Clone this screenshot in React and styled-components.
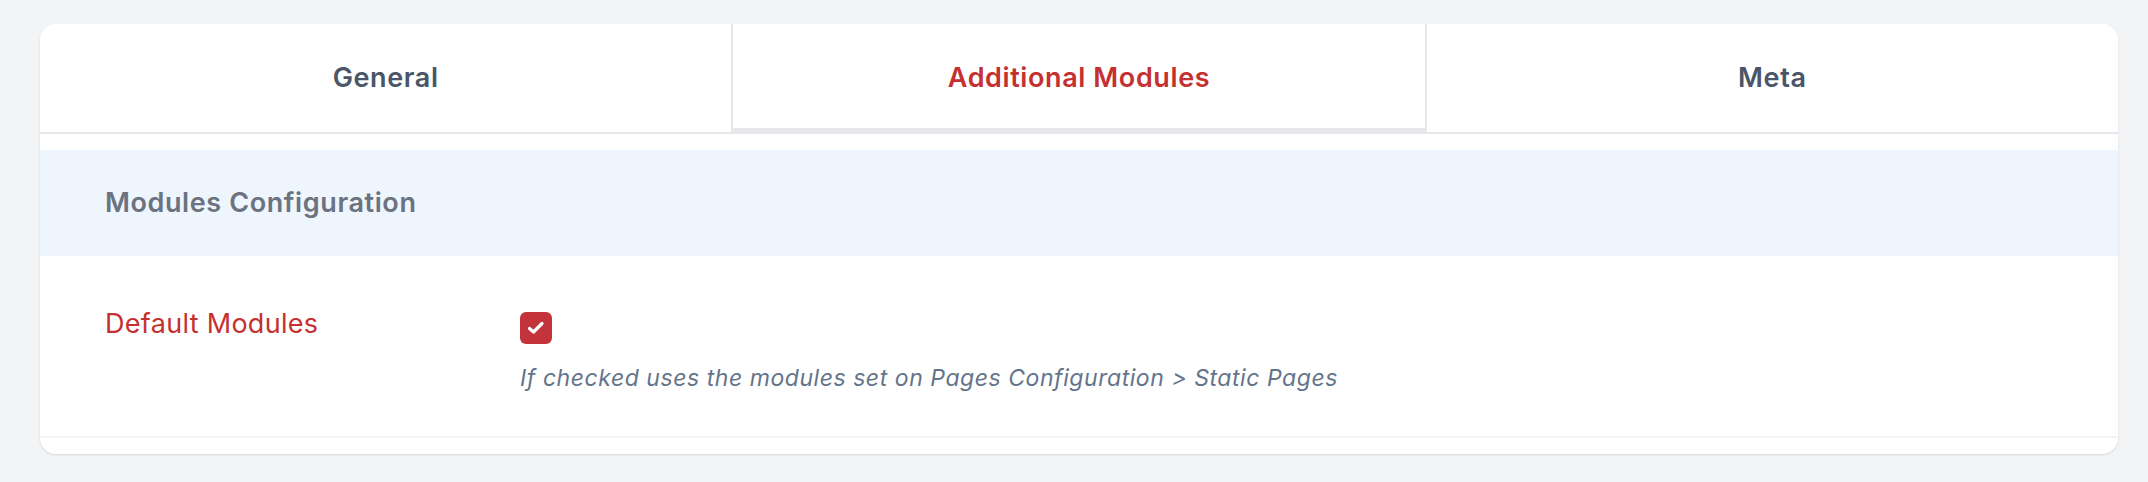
import React, { useState } from "react";
import styled, { createGlobalStyle } from "styled-components";

const GlobalStyle = createGlobalStyle`
  html, body { margin: 0; padding: 0; background: #f3f4f6; }
  body { font-family: Inter, "Noto Sans", Arial, sans-serif; -webkit-font-smoothing: antialiased; }
  * { box-sizing: border-box; }
`;

const Page = styled.div`
  padding: 24px 30px 29px 40px;
`;

const Card = styled.div`
  background: #ffffff;
  border-radius: 16px;
  box-shadow: 0 1px 3px rgba(0, 0, 0, 0.08), 0 1px 2px rgba(0, 0, 0, 0.04);
  overflow: hidden;
  padding-bottom: 16px;
`;

const TabBar = styled.div`
  display: flex;
  height: 110px;
`;

const Tab = styled.button`
  flex: 1 1 0;
  display: flex;
  align-items: center;
  justify-content: center;
  background: #ffffff;
  border: none;
  border-bottom: ${(p) => (p.$active ? "6px" : "2px")} solid #e5e7eb;
  border-left: ${(p) => (p.$active ? "2px solid #e5e7eb" : "none")};
  border-right: ${(p) => (p.$active ? "2px solid #e5e7eb" : "none")};
  padding: ${(p) => (p.$active ? "2px 0 0" : "0 0 2px")};
  font-family: Inter, "Noto Sans", Arial, sans-serif;
  font-size: 27px;
  font-weight: 600;
  letter-spacing: 0.6px;
  color: ${(p) => (p.$active ? "#c53030" : "#4a5568")};
  cursor: pointer;
`;

const Body = styled.div`
  padding-top: 16px;
`;

const SectionHeader = styled.div`
  height: 106px;
  display: flex;
  align-items: center;
  padding: 0 65px 2px;
  background: #eef5fd;
  font-size: 27px;
  font-weight: 600;
  letter-spacing: 0.6px;
  color: #6b7280;
`;

const FieldRow = styled.div`
  display: grid;
  grid-template-columns: 415px 1fr;
  padding: 48px 65px 41px;
  border-bottom: 2px solid #f3f4f6;
`;

const Label = styled.label`
  font-size: 27px;
  line-height: 40.5px;
  font-weight: 400;
  letter-spacing: 0.3px;
  color: #c53030;
`;

const Control = styled.div`
  display: flex;
  flex-direction: column;
  align-items: flex-start;
  padding-top: 8px;
`;

const CheckBox = styled.button`
  width: 32px;
  height: 32px;
  border: none;
  border-radius: 6px;
  padding: 0;
  display: flex;
  align-items: center;
  justify-content: center;
  background: ${(p) => (p.$checked ? "#c2343a" : "#ffffff")};
  box-shadow: ${(p) => (p.$checked ? "none" : "inset 0 0 0 2px #d1d5db")};
  cursor: pointer;
`;

const Help = styled.p`
  margin: 17px 0 0;
  font-size: 23px;
  line-height: 34px;
  font-style: italic;
  letter-spacing: 0.55px;
  color: #64748b;
`;

export default function App() {
  const [active, setActive] = useState(1);
  const [checked, setChecked] = useState(true);
  const tabs = ["General", "Additional Modules", "Meta"];
  return (
    <>
      <GlobalStyle />
      <Page>
        <Card>
          <TabBar>
            {tabs.map((t, i) => (
              <Tab key={t} $active={i === active} onClick={() => setActive(i)}>
                {t}
              </Tab>
            ))}
          </TabBar>
          <Body>
            <SectionHeader>Modules Configuration</SectionHeader>
            <FieldRow>
              <Label>Default Modules</Label>
              <Control>
                <CheckBox $checked={checked} onClick={() => setChecked(!checked)} aria-checked={checked} role="checkbox">
                  {checked && (
                    <svg width="20" height="20" viewBox="0 0 20 20">
                      <polyline points="3.5,10.5 7.5,14 16,5.5" fill="none" stroke="#ffffff" strokeWidth="3.2" strokeLinecap="round" strokeLinejoin="round" />
                    </svg>
                  )}
                </CheckBox>
                <Help>If checked uses the modules set on Pages Configuration &gt; Static Pages</Help>
              </Control>
            </FieldRow>
          </Body>
        </Card>
      </Page>
    </>
  );
}
